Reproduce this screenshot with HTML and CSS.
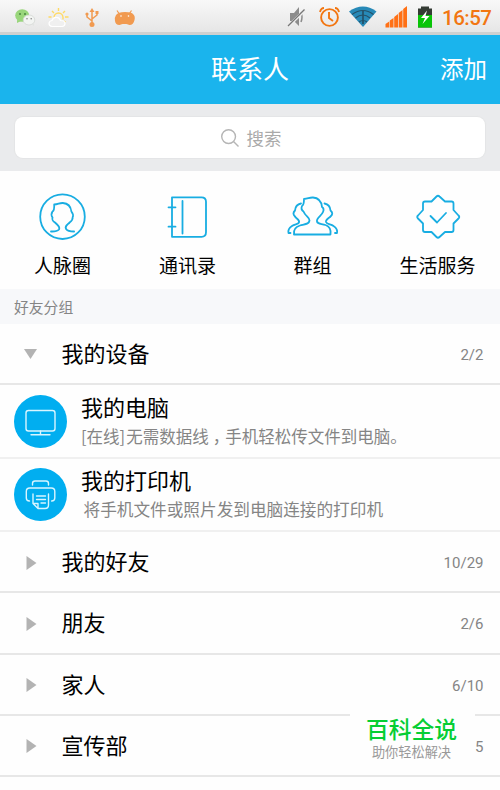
FILE: index.html
```html
<!DOCTYPE html>
<html lang="zh-CN">
<head>
<meta charset="utf-8">
<title>联系人</title>
<link rel="stylesheet" href="styles.css">
</head>
<body>
<div class="phone">
  <div class="status">
    <svg class="status-left" viewBox="0 0 150 32" width="150" height="32">
      <ellipse cx="22.2" cy="15.5" rx="7" ry="6.3" fill="#99d67b"/><path d="M17 20v3l4-2z" fill="#99d67b"/>
      <circle cx="20" cy="14" r="1" fill="#4b8741"/><circle cx="25" cy="14" r="1" fill="#4b8741"/>
      <ellipse cx="29" cy="20" rx="5.8" ry="5" fill="#f2f4f2" stroke="#d0d4d0" stroke-width=".7"/><path d="M31 24l3 2v-3z" fill="#e2e4e2"/>
      <circle cx="27" cy="18.7" r=".8" fill="#888"/><circle cx="31.2" cy="18.7" r=".8" fill="#888"/>
      <path d="M58.5 8v3M52 11l2 2M65 11l-2 2M48.5 17h3M65 17h3.5M64 21l1.5 1M54 17.5a4.5 4.5 0 0 1 9 0v2" fill="none" stroke="#ffda64" stroke-width="1.4"/>
      <path d="M52 26.5q-3-.5-3-3t3-3q1-3.5 4.5-3.2 3.2.2 4 3.2 4.5 0 4.5 3 0 2.7-3 3z" fill="#f0f0f0" stroke="#fff" stroke-width="1.2"/>
      <path d="M92 24V11M92 21l-5-4v-3M92 19l5-4v-2" fill="none" stroke="#f19a50" stroke-width="1.5"/>
      <path d="M92 8l-2.5 4h5z" fill="#f19a50"/><circle cx="92" cy="24.5" r="2.5" fill="#f19a50"/><circle cx="87" cy="14" r="1.6" fill="#f19a50"/><path d="M95.5 11h3v3h-3z" fill="#f19a50"/>
      <path d="M117 10.5l2 3M131.5 10.5l-2 3" stroke="#f19a50" stroke-width="1.2"/>
      <path d="M116 15q2-3 9-3t8 2q2.500 2 1.500 6-1 5-5 5l-3-1h-4l-3 1q-4 0-4.500-4-.5-4 1-6z" fill="#f19a50"/><circle cx="121" cy="16" r=".8" fill="#fff"/><circle cx="128.5" cy="16" r=".8" fill="#fff"/>
    </svg>
    <svg class="status-right" viewBox="285 0 150 32" width="150" height="32">
      <path d="M290 13h4l5-6v19l-5-5h-4z" fill="#8c8c8c"/><path d="M301 12q2 5 0 10" fill="none" stroke="#8c8c8c" stroke-width="1.5"/>
      <path d="M288.5 26L305 10" stroke="#eee" stroke-width="3"/><path d="M288 26L304.5 9.5" stroke="#777" stroke-width="1.3"/>
      <g fill="none" stroke="#f27611" stroke-width="1.9"><circle cx="329.5" cy="17.5" r="8.4"/><path d="M329 12v6l4 3"/><path d="M320 12q1-4 4-4M335 8q3 0 4 4"/></g>
      <path d="M349 11.5Q363 1.5 376.5 11.5L363 27z" fill="#2789b7"/>
      <g fill="none" stroke="#245168" stroke-width="1.1"><path d="M352 14.5q11-8 21.5 0M355.5 18q7.5-6 14.5 0M359 22q4-3 8 0"/></g><path d="M363 11v13" stroke="#245168" stroke-width="1.7"/>
      <path d="M385.5 27.5V24l3.7-2.5v6zM389.800 27.500V20.5l3.700-2.5v9.500zM394.200 27.500V17l3.800-3v13.500zM398.700 27.500V13l3.800-3v17.500zM403.200 27.500V9l3.800-3v21.500z" fill="#ff7015"/>
      <path d="M418 8.5h3v-2h8v2h3v19h-14z" fill="#343b34"/><path d="M418 15h14v12.5h-14z" fill="#08c507"/>
      <path d="M427 10.5l-6 7.5h4l-2.500 6 7-8h-4z" fill="#fff"/>
    </svg>
    <span class="clock">16:57</span>
  </div>
  <header class="titlebar">
    <h1>联系人</h1>
    <span class="add">添加</span>
  </header>
  <div class="search-wrap">
    <div class="search">
      <svg viewBox="0 0 20 20" width="20" height="20" fill="none" stroke="#b5b5b5" stroke-width="1.4"><circle cx="8.6" cy="8.6" r="6.9"/><path d="M13.5 13.5l5 5"/></svg>
      <span>搜索</span>
    </div>
  </div>
  <nav class="shortcuts">
    <div class="shortcut">
      <svg viewBox="36 190 54 54" width="54" height="54"><circle cx="62.5" cy="216.7" r="22.3"/><path d="M51 231.5q6 .2 8-2c1.5-3-1-4-4-7-3-2-3-3-2.5-5q-2-3 0-6 2-1 1.7-7c4 0 5-1.7 8.700-1.500q7.500.5 8.500 8.500 2.500 3 1.200 6c.3 2-1 3.500-3 5-3 3-5 4-3.500 6.500q1.500 2.500 8 2.500"/></svg>
      <span>人脉圈</span>
    </div>
    <div class="shortcut">
      <svg viewBox="161 190 54 54" width="54" height="54"><path d="M172 197.3h29.5q4.5 0 4.5 4.5v30.500q0 4.500-4.500 4.500H172zM182.500 201v32.500M168.500 207.300h7M168.500 226.700h7"/></svg>
      <span>通讯录</span>
    </div>
    <div class="shortcut">
      <svg viewBox="286 190 54 54" width="54" height="54"><path d="M294 234.500q-1-7 6-9c6-1.500 9-1.500 9.500-5 .3-3-4-4-6-9q-3-2-1.500-5.500 2-1 2-7c4 0 5-1.700 9-1.500q8 .5 9 9.500 2.500 1.500 1 5c-1.500 4-7 6-6 9.500.5 3 5 2 8.500 3.500q6 2 5 9.500z"/><path d="M301 203.500q-5.500 1-6 7-3 3 0 6c1 2 5 3 4 6-1 2-4 1.500-7 3.500q-4.500 3-3.500 7h2M324.500 203.500q5.500 1 6 7 3.500 3 0 6c-2 2-5 3-4.500 5.500 1 2.500 5 2 7.500 4q4.500 3 3.500 7h-2"/></svg>
      <span>群组</span>
    </div>
    <div class="shortcut">
      <svg viewBox="411 190 54 54" width="54" height="54"><path d="M436.500 196.500q1.500-1.500 3 0l5.500 5h6.500q2 0 2 2v6.500l5 5.500q1.500 1.500 0 3l-5 5v6.500q0 2-2 2H445l-5.500 5q-1.500 1.500-3 0l-5-5H425q-2 0-2-2v-6.500l-5-5q-1.500-1.500 0-3l5-5.500v-6.500q0-2 2-2h6.500zM430.500 216l6.500 6.500 9-9.500"/></svg>
      <span>生活服务</span>
    </div>
  </nav>
  <div class="section">好友分组</div>
  <main>
    <div class="group first"><svg class="arrow" viewBox="0 0 14 14"><path d="M0 2h13L6.500 12z"/></svg><span class="name">我的设备</span><span class="count">2/2</span></div>
    <div class="device">
      <svg class="avatar" viewBox="0 0 53 53" width="53" height="53"><circle cx="26.5" cy="26.5" r="26.5" fill="#01aef0"/><g fill="none" stroke="#d9f5ff" stroke-width="1.4" stroke-linecap="round"><rect x="12" y="15.5" width="29" height="20.5" rx="2.5"/><path d="M26.5 36v3.5M17 39.8h19"/></g></svg>
      <div class="info"><div class="name">我的电脑</div><div class="desc first-desc">[在线]<span class="desc-rest">无需数据线<span class="comma">，</span>手机轻松传文件到电脑。</span></div></div>
    </div>
    <div class="device">
      <svg class="avatar" viewBox="0 0 53 53" width="53" height="53"><circle cx="26.5" cy="26.5" r="26.5" fill="#01aef0"/><g fill="none" stroke="#d9f5ff" stroke-width="1.4" stroke-linecap="round" stroke-linejoin="round"><path d="M18.5 17v-1.5q0-2.500 2.500-2.500h11q2.500 0 2.500 2.500V17M15.500 33q-3.200 0-3.200-3v-6.500q0-3.500 3.500-3.500h21.500q3.500 0 3.500 3.500V30q0 3-3.200 3M19 26v9.500l5 5h7q3.500 0 3.500-3.500V26M19 35.500h5v5M22.500 28h9M22.500 31.500h9M27 35h4.500"/></g></svg>
      <div class="info"><div class="name">我的打印机</div><div class="desc indent">将手机文件或照片发到电脑连接的打印机</div></div>
    </div>
    <div class="group"><svg class="arrow" viewBox="0 0 14 14"><path d="M2.5 0v14l10-7z"/></svg><span class="name">我的好友</span><span class="count">10/29</span></div>
    <div class="group"><svg class="arrow" viewBox="0 0 14 14"><path d="M2.5 0v14l10-7z"/></svg><span class="name">朋友</span><span class="count">2/6</span></div>
    <div class="group"><svg class="arrow" viewBox="0 0 14 14"><path d="M2.5 0v14l10-7z"/></svg><span class="name">家人</span><span class="count">6/10</span></div>
    <div class="group"><svg class="arrow" viewBox="0 0 14 14"><path d="M2.5 0v14l10-7z"/></svg><span class="name">宣传部</span><span class="count">5</span></div>
  </main>
  <aside class="badge"><strong>百科全说</strong><span>助你轻松解决</span></aside>
</div>
</body>
</html>
```

FILE: styles.css
```css
* { box-sizing: border-box; }
body { margin: 0; background: #fefefe; color: #000; font-family: "Noto Sans CJK SC", sans-serif; }
.phone { position: relative; width: 500px; height: 790px; overflow: hidden; background: #fefefe; }
.status { display: flex; height: 35px; background: linear-gradient(#f8f8f8, #e6e6e6); border-bottom: 3px solid #cfd0d0; }
.status svg { flex: none; }
.status-right { margin-left: 135px; }
.clock { margin-left: 7px; font: 500 20.5px/37px Roboto, sans-serif; color: #f27611; letter-spacing: -.5px; }
.titlebar { display: grid; grid-template-columns: 1fr auto 1fr; align-items: center; height: 69px; background: #1ab4ed; color: #fff; }
.titlebar h1 { grid-column: 2; margin: 0; font-size: 26px; font-weight: 400; line-height: 66px; height: 69px; }
.add { justify-self: end; margin-right: 13px; font-size: 23.5px; line-height: 66px; height: 69px; }
.search-wrap { height: 67px; padding: 13px 15px 0; background: #eaebed; }
.search { display: flex; align-items: center; justify-content: center; gap: 7px; height: 41px; padding-left: 1px; border-radius: 8px; background: #fff; box-shadow: 0 0 1px 1px #e4e5e6; color: #aaa; font-size: 17.5px; }
.search span { line-height: 40px; }
.shortcuts { display: grid; grid-template-columns: repeat(4, 125px); height: 118px; padding-top: 19px; }
.shortcut { display: flex; flex-direction: column; align-items: center; font-size: 19px; line-height: 28px; white-space: nowrap; }
.shortcut svg { fill: none; stroke: #18ade2; stroke-width: 1.8; stroke-linejoin: round; stroke-linecap: round; margin-bottom: 7px; }
.section { height: 34.5px; padding-left: 14px; background: #f7f8fa; color: #858585; font-size: 14.8px; line-height: 35px; }
.group { display: flex; align-items: center; height: 61.2px; padding: 0 16.5px 0 23.5px; border-bottom: 2px solid #e7e7e7; }
.group.first { height: 61.7px; }
.group .name { margin: 0 0 3px 24px; line-height: 56px; }
.arrow { width: 14px; height: 14px; margin-top: 2px; fill: #b3b3b3; }
.name { font-size: 22px; }
.count { margin: 3px 0 0 auto; color: #858585; font: 15px Roboto, sans-serif; }
.device { display: flex; height: 73.5px; padding: 9.5px 0 0 14px; border-bottom: 2px solid #f0f0f0; }
.avatar { flex: none; margin-right: 14px; }
.info .name { height: 28px; line-height: 23px; }
.desc { color: #858585; font-size: 16.65px; line-height: 26px; white-space: nowrap; }
.first-desc { font-size: 16.5px; }
.desc-rest { margin-left: 1px; }
.comma { display: inline-block; width: 16.5px; text-indent: 4px; }
.indent { padding-left: 2.5px; }
.badge { position: absolute; left: 350px; top: 712px; display: flex; flex-direction: column; align-items: center; width: 125px; height: 55px; padding-right: 2px; background: #fefefe; }
.badge strong { color: #06ce34; font-size: 22.8px; font-weight: 500; line-height: 34px; }
.badge span { color: #999; font-size: 13.2px; line-height: 11px; }
```
